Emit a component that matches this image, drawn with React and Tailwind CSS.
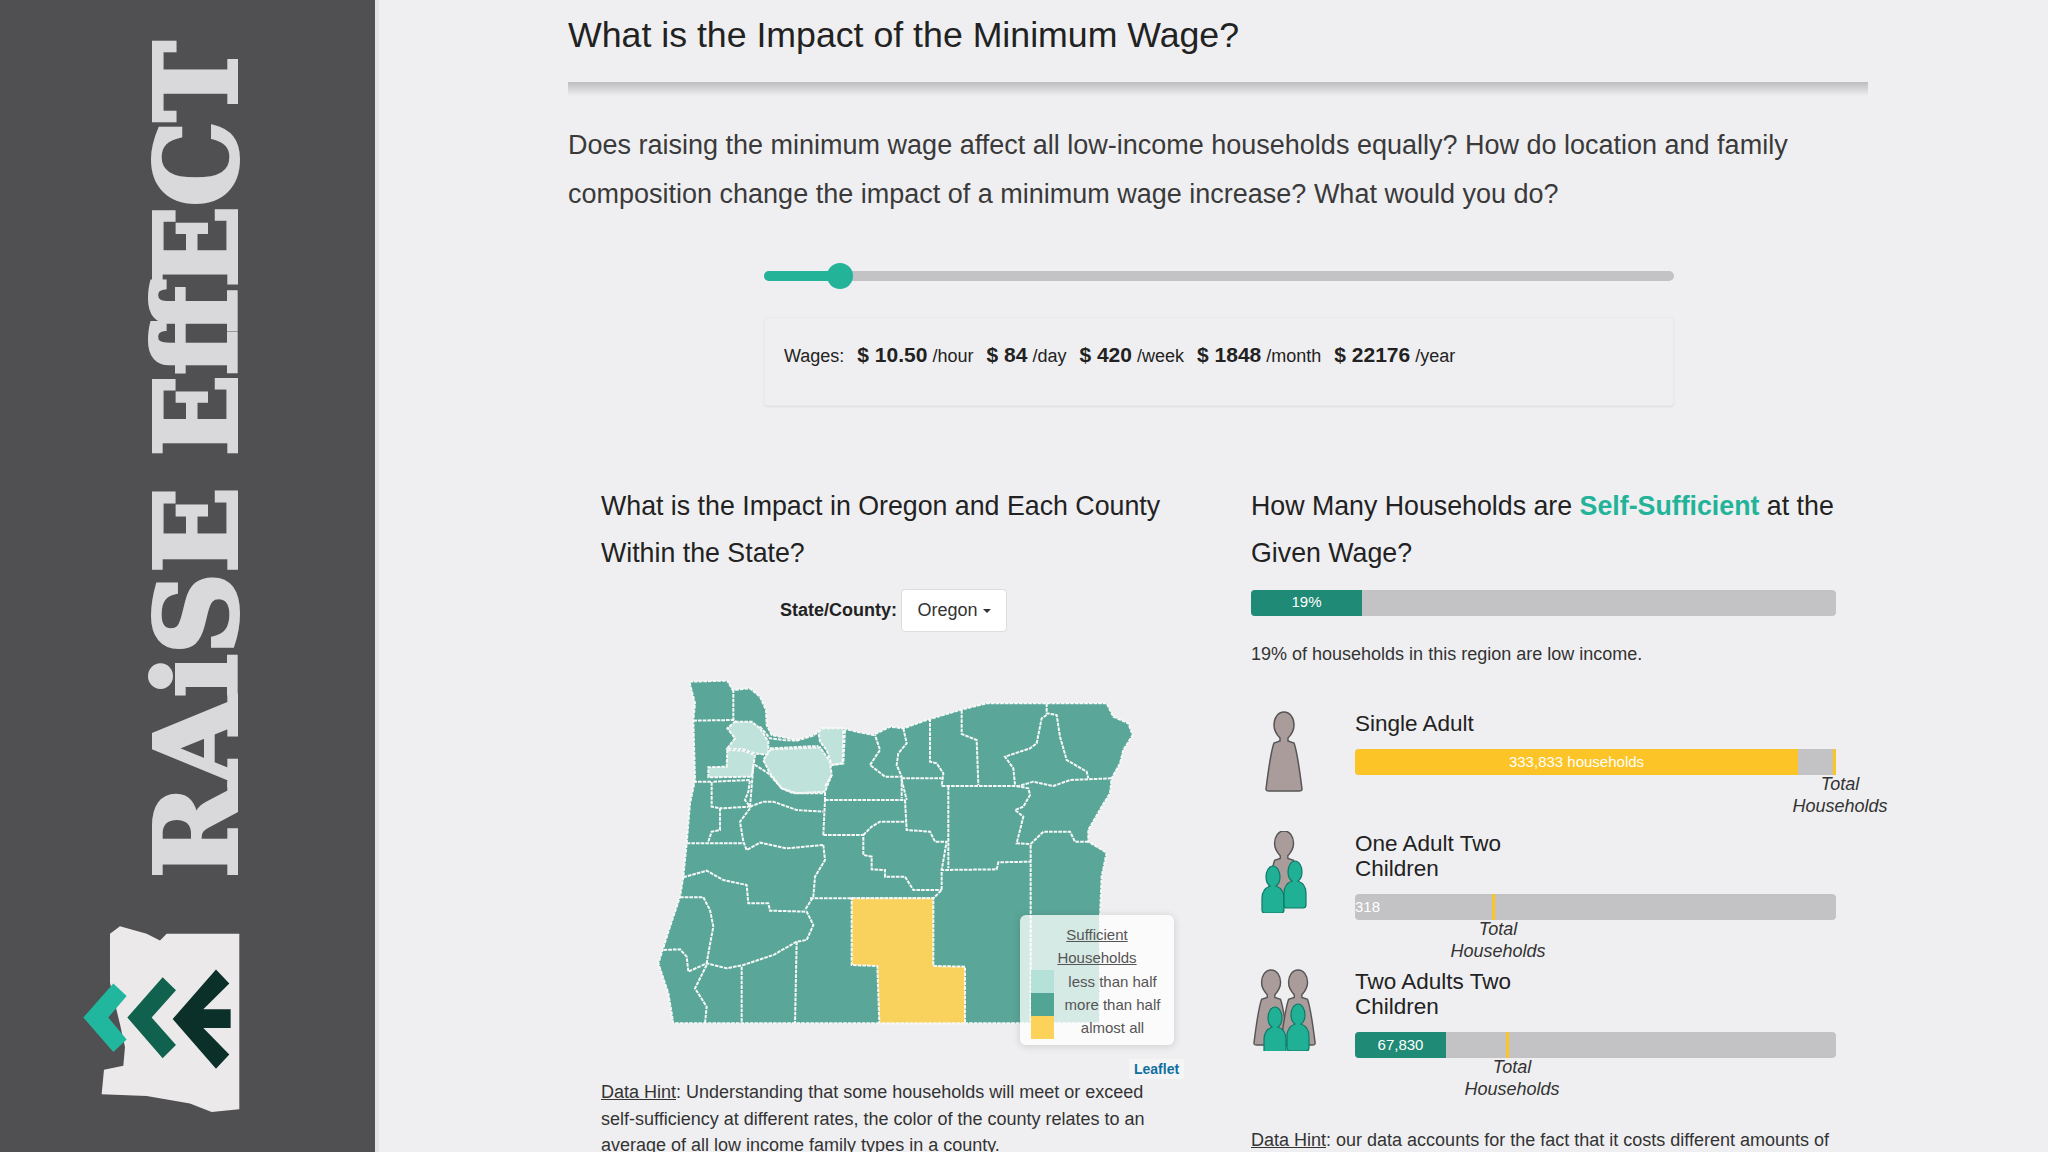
import React from 'react'

// county borders of the map, in a 1560x1200 drawing space
const countyLines = [
  '280,88 280,180', '160,182 280,180 290,186', '360,200 390,235 430,240 470,242 525,225', '390,265 535,258',
  '160,365 215,365 215,440 240,445 240,510 215,515 205,545', '220,365 330,360 325,395 315,420 330,440 240,445',
  '330,440 370,425 400,425 470,450 550,455', '330,440 340,320 345,315 385,340 425,385 470,400 555,400 555,420',
  '330,445 300,485 310,545 320,570 360,548 440,565 550,555', '140,550 310,550',
  '130,652 200,632 250,660 320,675 325,730 385,730 390,752 500,755 520,795 500,840 470,845 400,885 310,915 260,925 200,910 145,935 140,890 120,868 70,870',
  '120,712 190,712 210,750 220,800 205,880 200,910', '200,915 165,985 200,1040 195,1090', '305,920 305,1090', '470,845 465,1090',
  '550,555 555,600 525,650 520,710 495,750', '510,715 880,715 905,690 905,630 1070,628 1075,607 1170,605', '1172,555 1172,1090',
  '550,525 670,525 670,585 695,590 695,628 735,630 735,650 795,650 820,690 905,690', '555,420 795,420', '550,525 555,420',
  '795,420 800,510 870,515 885,545 920,545 905,630', '670,525 695,500 720,485 800,485', '785,355 905,355', '785,360 800,420', '925,380 925,625',
  '905,378 1130,378 1165,385 1170,405 1150,440 1125,450 1150,470 1130,550 1172,552', '1172,552 1210,515 1290,515 1305,545 1345,545',
  '1130,380 1180,365 1240,378 1290,360 1415,355', '1220,130 1220,160 1250,165 1260,230 1280,300 1340,335 1345,355',
  '1220,165 1205,175 1190,250 1170,265 1095,290 1120,325 1125,375', '965,150 965,222 1010,240 1015,375', '870,175 870,305 890,310 910,340 905,378',
  '790,205 800,250 775,280 770,315 785,350 735,350 690,315 720,270 705,225', '615,210 610,310 575,315', '575,345 555,380', '785,355 785,415',
]

const lightCounties = [
  '285,185 335,185 360,205 385,245 385,285 345,280 310,268 262,265 285,235 262,205',
  '262,270 310,272 345,285 335,350 205,352 205,322 260,320',
  '392,268 540,262 570,305 575,345 555,395 460,400 425,385 390,340 370,300',
  '535,215 550,205 610,205 608,310 575,315 560,270 540,245',
]

const stateOutline = '148,65 262,62 278,90 330,85 360,110 378,150 380,195 395,225 470,240 530,220 540,205 610,205 650,215 700,225 750,200 790,205 860,180 960,150 1040,130 1400,130 1420,170 1465,190 1478,225 1450,270 1440,310 1415,355 1410,400 1385,440 1345,510 1345,545 1400,578 1385,650 1380,770 1380,1090 100,1090 85,1000 55,910 90,800 120,710 130,650 140,550 150,430 165,360 160,180 165,130'

const dash = { stroke: '#f6f8f7', strokeWidth: 6, strokeDasharray: '11 3' }

function Sidebar() {
  return (
    <aside className="w-[379px] h-[1152px] shrink-0 bg-[#504f51] border-r-4 border-[#e2e2e4]">
      <svg viewBox="0 0 375 1152" className="block w-[375px] h-[1152px]">
        <g className="font-['DejaVu_Serif',serif] font-bold font-stretch-condensed" fill="#d9d9db" stroke="#d9d9db" strokeWidth="4" fontSize="112">
          <text transform="translate(236 878) rotate(-90)" textLength="391" lengthAdjust="spacingAndGlyphs">RAiSE</text>
          <text transform="translate(236 456) rotate(-90)" textLength="414" lengthAdjust="spacingAndGlyphs">EffECT</text>
        </g>
        <g transform="translate(0 560) scale(.3333 .3775)">
          <polygon fill="#ebe9ea" points="330,990 360,970 440,990 480,1008 500,990 718,990 718,1455 635,1462 570,1440 440,1420 305,1415 312,1350 370,1340 375,1290 360,1230 330,1120" />
          <polygon fill="#21b79f" points="250,1212 340,1122 380,1155 325,1212 380,1270 340,1303" />
          <polygon fill="#11614f" points="382,1212 488,1105 528,1140 455,1212 528,1285 488,1320" />
          <polygon fill="#0b2f29" points="518,1216 648,1085 688,1122 610,1190 692,1190 692,1240 610,1240 688,1310 648,1348" />
        </g>
      </svg>
    </aside>
  )
}

function OregonMap() {
  return (
    <div className="relative h-[419px] mt-[28px]">
      <svg viewBox="0 0 1560 1200" className="block ml-[39px] w-[520px] h-[400px]">
        <polygon points={stateOutline} fill="#5aa698" {...dash} />
        {lightCounties.map((p) => (
          <polygon key={p} points={p} fill="#bfe2da" {...dash} />
        ))}
        {countyLines.map((p) => (
          <polyline key={p} points={p} fill="none" {...dash} />
        ))}
        <polygon points="635,715 880,715 880,918 975,920 975,1090 718,1090 712,918 635,915" fill="#f9d25e" {...dash} />
      </svg>
      <div className="absolute left-[419px] top-[255px] w-[154px] h-[130px] rounded-md bg-white/75 shadow-[0_1px_8px_rgba(0,0,0,0.15)] px-[11px] pt-[8px] text-[15px] leading-[23.3px] text-[#555]">
        <div className="text-center underline">Sufficient</div>
        <div className="text-center underline">Households</div>
        {[
          ['less than half', 'bg-[#b5e2d8]'],
          ['more than half', 'bg-[#50a595]'],
          ['almost all', 'bg-[#fcd25a]'],
        ].map(([label, color]) => (
          <div key={label} className="flex">
            <span className={`w-[23px] h-[23.3px] shrink-0 ${color}`} />
            <span className="flex-1 pl-[8px] text-center whitespace-nowrap">{label}</span>
          </div>
        ))}
      </div>
      <div className="absolute left-[528px] top-[399px] px-[5px] bg-white/40 text-[14px] leading-[20px] font-bold text-[#0f6f9f]">Leaflet</div>
    </div>
  )
}

function Adult() {
  return (
    <path d="M19 1c6 0 10 6 10 13 0 6-3 10-6 13v3l6 2c3 8 6 30 8 46 0 2-1 2-3 2H4c-2 0-3 0-3-2 2-16 5-38 8-46l6-2v-3c-3-3-6-7-6-13C9 7 13 1 19 1z" fill="#ab9c9c" stroke="#555" strokeWidth="1.5" />
  )
}

function Child({ x = 0, y = 0 }) {
  return (
    <path transform={`translate(${x} ${y})`} d="M12 1c4 0 7 5 7 11 0 4-1 7-4 9 5 2 8 6 8 12v12c0 2-1 3-3 3H4c-2 0-3-1-3-3V33c0-6 3-10 8-12-3-2-4-5-4-9C5 6 8 1 12 1z" fill="#1fb096" stroke="#0e7a66" strokeWidth="1.2" />
  )
}

function TotalBar({ marker, fill, fillClass, label, totalLeft }) {
  return (
    <div className="relative h-[26px] w-[481px] rounded bg-[#c3c2c5]">
      {fill > 0 && (
        <div className={`h-full rounded-l flex items-center justify-center text-white text-[15px] ${fillClass}`} style={{ width: fill }}>{label}</div>
      )}
      {fill === 0 && <div className="absolute left-0 top-0 leading-[26px] text-[15px] text-white">{label}</div>}
      <div className="absolute top-0 h-full w-[3px] bg-[#fcc426]" style={{ left: marker }} />
      <div className="absolute top-[24px] w-[110px] text-center italic text-[18px] leading-[22px] text-[#333]" style={{ left: totalLeft }}>Total Households</div>
    </div>
  )
}

function HouseholdRow({ height, icon, title, children }) {
  return (
    <div className="flex" style={{ height }}>
      <div className="w-[104px] shrink-0">{icon}</div>
      <div className="flex-1">
        <div className="text-[22.5px] leading-[25px] text-[#222] w-[190px]">{title}</div>
        <div className="mt-[13px]">{children}</div>
      </div>
    </div>
  )
}

export default function App() {
  return (
    <div className="flex h-[1152px] overflow-hidden bg-[#efeff1] text-[#333] font-['Liberation_Sans',Arial,sans-serif]">
      <Sidebar />
      <main className="flex-1 pl-[189px] pr-[180px]">
        <h1 className="text-[35.7px] leading-[70px] text-[#222]">What is the Impact of the Minimum Wage?</h1>
        <div className="mt-[12px] h-[14px] bg-gradient-to-b from-[#bdbcbe] to-[#efeff1]" />
        <p className="mt-[25px] text-[27px] leading-[48.5px] text-[#3a3a3a]">
          Does raising the minimum wage affect all low-income households equally? How do location and family composition change the impact of a minimum wage increase? What would you do?
        </p>
        <div className="ml-[196px] mr-[194px]">
          <div className="relative mt-[53px] h-[10px] rounded-full bg-[#c3c2c5]">
            <div className="h-full w-[77px] rounded-l-full bg-[#22b399]" />
            <div className="absolute left-[63px] top-[-8px] h-[26px] w-[26px] rounded-full bg-[#22b399]" />
          </div>
          <div className="mt-[36px] h-[89px] rounded border border-[#eaeaec] shadow-[0_1px_2px_rgba(0,0,0,0.08)] pl-[19px] pt-[23px] flex items-baseline gap-[13px] text-[18px] leading-[28px] text-[#222] whitespace-nowrap">
            <span>Wages:</span>
            {[['$ 10.50', '/hour'], ['$ 84', '/day'], ['$ 420', '/week'], ['$ 1848', '/month'], ['$ 22176', '/year']].map(([amount, unit]) => (
              <span key={unit}><b className="text-[21px]">{amount}</b> {unit}</span>
            ))}
          </div>
        </div>

        <div className="mt-[77px] grid grid-cols-[650px_585px] pl-[33px]">
          <section>
            <h2 className="w-[590px] text-[26.75px] leading-[47px] text-[#222]">What is the Impact in Oregon and Each County Within the State?</h2>
            <div className="mt-[12px] flex items-center pl-[179px]">
              <span className="text-[18px] font-bold text-[#222]">State/County:</span>
              <button className="ml-[4px] h-[43px] w-[106px] rounded border border-[#ddd] bg-white text-[18px] text-[#333] flex items-center justify-center gap-[5px]">
                Oregon <span className="border-x-[4px] border-t-[4px] border-x-transparent border-t-[#333]" />
              </button>
            </div>
            <OregonMap />
            <p className="w-[570px] text-[18px] leading-[26.5px] text-[#333]">
              <span className="underline">Data Hint</span>: Understanding that some households will meet or exceed self-sufficiency at different rates, the color of the county relates to an average of all low income family types in a county.
            </p>
          </section>
          <section>
            <h2 className="text-[26.75px] leading-[47px] text-[#222]">How Many Households are <b className="text-[#22b399]">Self-Sufficient</b> at the Given Wage?</h2>
            <div className="mt-[13px] h-[26px] rounded bg-[#c3c2c5]">
              <div className="h-full w-[111px] rounded-l bg-[#1f8a75] text-white text-[15px] leading-[24px] text-center">19%</div>
            </div>
            <p className="mt-[25px] text-[18px] leading-[26px]">19% of households in this region are low income.</p>
            <div className="mt-[44px]">
              <HouseholdRow
                height={120}
                title="Single Adult"
                icon={<svg viewBox="0 0 38 82" className="ml-[14px] w-[38px] h-[82px]"><Adult /></svg>}
              >
                <TotalBar marker={478} fill={443} fillClass="bg-[#fcc426]" label="333,833 households" totalLeft={430} />
              </HouseholdRow>
              <HouseholdRow
                height={138}
                title="One Adult Two Children"
                icon={
                  <svg viewBox="0 0 46 82" className="ml-[10px] w-[46px] h-[82px]">
                    <g transform="translate(5 -1) scale(.95)"><Adult /></g>
                    <Child x={0} y={34} />
                    <Child x={22} y={29} />
                  </svg>
                }
              >
                <TotalBar marker={137} fill={0} label="318" totalLeft={88} />
              </HouseholdRow>
              <HouseholdRow
                height={150}
                title="Two Adults Two Children"
                icon={
                  <svg viewBox="0 0 64 82" className="ml-[2px] w-[64px] h-[82px]">
                    <g transform="scale(.95)"><Adult /></g>
                    <g transform="translate(27 0) scale(.95)"><Adult /></g>
                    <Child x={10} y={37} />
                    <Child x={33} y={34} />
                  </svg>
                }
              >
                <TotalBar marker={151} fill={91} fillClass="bg-[#1f8a75]" label="67,830" totalLeft={102} />
              </HouseholdRow>
            </div>
            <p className="mt-[8px] text-[18px] leading-[26px] whitespace-nowrap"><span className="underline">Data Hint</span>: our data accounts for the fact that it costs different amounts of</p>
          </section>
        </div>
      </main>
    </div>
  )
}
